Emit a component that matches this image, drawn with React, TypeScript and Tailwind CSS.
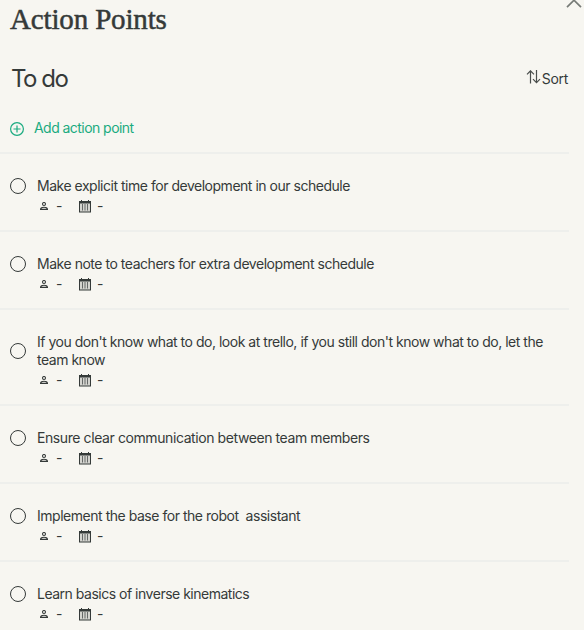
import React from "react";

const items = [
  { text: "Make explicit time for development in our schedule", tracking: "tracking-[-0.48px]" },
  { text: "Make note to teachers for extra development schedule", tracking: "tracking-[-0.47px]" },
  {
    text: "If you don't know what to do, look at trello, if you still don't know what to do, let the\nteam know",
    tracking: "tracking-[-0.48px]",
  },
  { text: "Ensure clear communication between team members", tracking: "tracking-[-0.41px]" },
  { text: "Implement the base for the robot  assistant", tracking: "tracking-[-0.47px]" },
  { text: "Learn basics of inverse kinematics", tracking: "tracking-[-0.49px]" },
];

function PersonIcon() {
  return (
    <svg width="8" height="8" viewBox="0 0 8 8" fill="none" stroke="#353a39" strokeWidth="1.1">
      <circle cx="4" cy="2" r="1.5" />
      <path d="M.5 7.4C.6 6 2 5.3 4 5.3s3.4.7 3.5 2.1z" />
    </svg>
  );
}

function CalendarIcon() {
  return (
    <svg width="12" height="13" viewBox="0 0 12 13" fill="none" stroke="#353a39">
      <rect x=".5" y="1.5" width="11" height="10.5" fill="#d4d4cf" strokeWidth="1" />
      <path d="M0 2.5h12" strokeWidth="2" />
      <path d="M2.5 0v3M9.5 0v3" strokeWidth="1" />
      <path d="M3.5 4v6.5M6 4v6.5M8.5 4v6.5" strokeWidth=".7" />
    </svg>
  );
}

function Item({ text, tracking }: { text: string; tracking: string }) {
  return (
    <li className="flex w-[569px] items-center border-b-2 border-[#eeefec] pt-[23px] pb-[13px] pl-[10px]">
      <span className="mb-[22px] size-4 shrink-0 rounded-full border border-[#353a39]" />
      <div className="ml-[11px]">
        <p className={`text-[14px] leading-[18px] whitespace-pre ${tracking}`}>{text}</p>
        <div className="flex h-[22px] items-center pl-[3px] text-[14px]">
          <PersonIcon />
          <span className="ml-[8px] w-[23px] leading-none">-</span>
          <CalendarIcon />
          <span className="ml-[6px] leading-none">-</span>
        </div>
      </div>
    </li>
  );
}

export default function App() {
  return (
    <main className="h-[630px] w-[584px] overflow-hidden bg-[#f7f6f1] font-['Inter',sans-serif] text-[#353a39]">
      <header className="flex h-[40px] justify-between pl-[10px]">
        <h1 className="pt-[3px] font-['Liberation_Serif',serif] text-[29px] leading-[32px] tracking-[-0.15px] [-webkit-text-stroke:0.5px_#353a39]">
          Action Points
        </h1>
        <svg className="mr-[2px]" width="16" height="10" viewBox="0 0 16 10" fill="none" stroke="#777b77" strokeWidth="1.7">
          <path d="M1 7.2 8 .2l7 7" />
        </svg>
      </header>
      <div className="flex h-[76px] items-center justify-between pr-[16px] pl-[11px]">
        <h2 className="pt-[2px] text-[24px] leading-8 tracking-[-1.5px]">To do</h2>
        <button className="flex items-center pt-[1px] text-[14px] leading-5 tracking-[-0.3px]">
          <svg className="mr-[1px] mb-[3px]" width="15" height="14" viewBox="0 0 15 14" fill="none" stroke="#4a4e4c" strokeWidth="1.2">
            <path d="M4.5 13.5V1M1 4.3 4.5.8 8 4.3M10.5 0v12.5M7 9.2l3.5 3.5L14 9.2" />
          </svg>
          Sort
        </button>
      </div>
      <button className="flex h-[38px] w-[569px] items-center border-b-2 border-[#eeefec] pb-[12px] pl-[10px] text-[14px] leading-5 tracking-[-0.55px] text-[#1bab80]">
        <svg className="mt-[1px] mr-[10px]" width="14" height="14" viewBox="0 0 14 14" fill="none" stroke="#1bab80" strokeWidth="1.2">
          <circle cx="7" cy="7" r="6.4" />
          <path d="M7 3.5v7M3.5 7h7" />
        </svg>
        Add action point
      </button>
      <ul>
        {items.map((item) => (
          <Item key={item.text} {...item} />
        ))}
      </ul>
    </main>
  );
}
